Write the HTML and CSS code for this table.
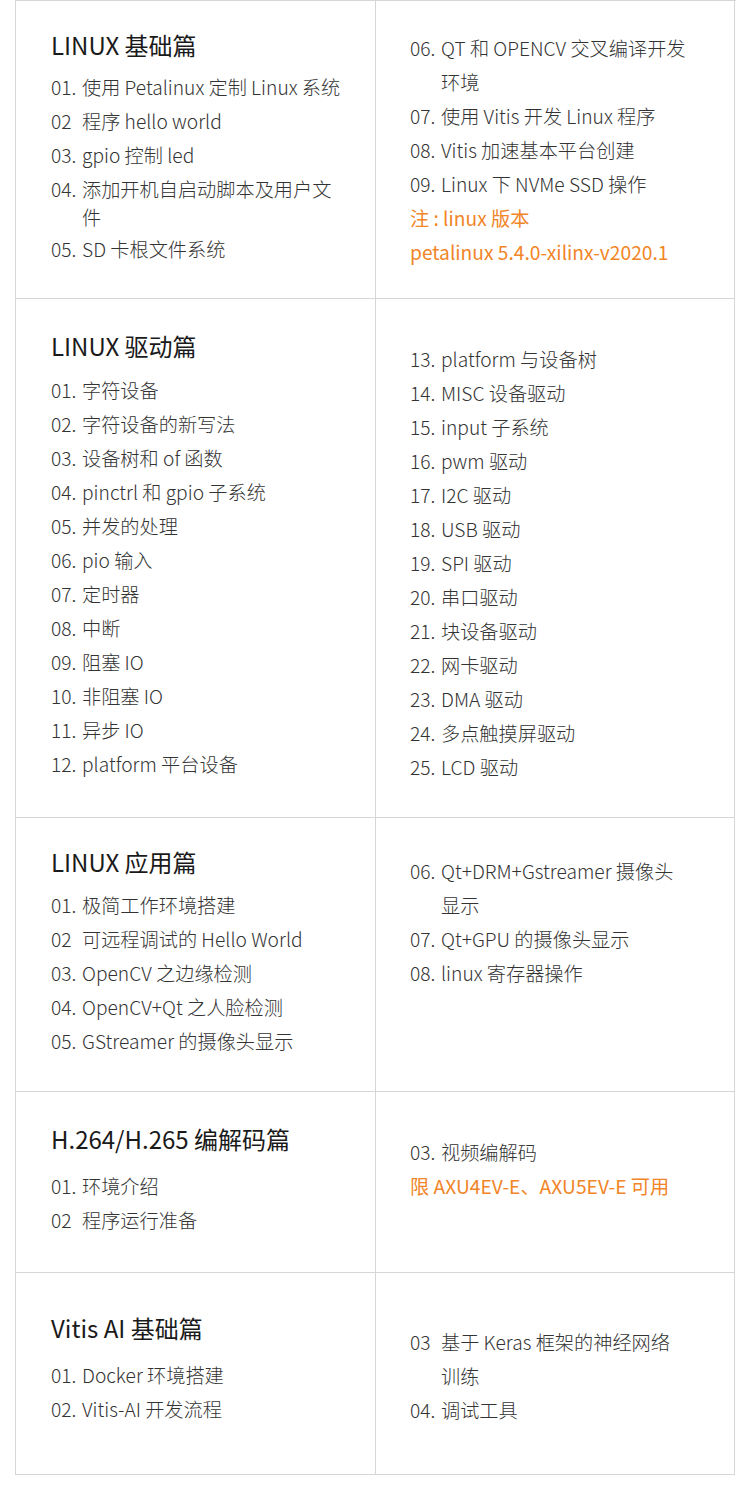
FILE: index.html
```html
<!DOCTYPE html>
<html lang="zh-CN">
<head>
<meta charset="utf-8">
<title>课程目录</title>
<link rel="stylesheet" href="styles.css">
</head>
<body>
<div class="table">
  <div class="cell l1">
    <h2 class="title">LINUX 基础篇</h2>
    <ul class="list">
      <li><span class="n">01.</span><span class="t">使用 Petalinux 定制 Linux 系统</span></li>
      <li><span class="n">02</span><span class="t">程序 hello world</span></li>
      <li><span class="n">03.</span><span class="t">gpio 控制 led</span></li>
      <li class="tight"><span class="n">04.</span><span class="t">添加开机自启动脚本及用户文<br>件</span></li>
      <li><span class="n">05.</span><span class="t">SD 卡根文件系统</span></li>
    </ul>
  </div>
  <div class="cell r1">
    <ul class="list">
      <li><span class="n">06.</span><span class="t">QT 和 OPENCV 交叉编译开发<br>环境</span></li>
      <li><span class="n">07.</span><span class="t">使用 Vitis 开发 Linux 程序</span></li>
      <li><span class="n">08.</span><span class="t">Vitis 加速基本平台创建</span></li>
      <li><span class="n">09.</span><span class="t">Linux 下 NVMe SSD 操作</span></li>
      <li class="note">注 : linux 版本</li>
      <li class="note">petalinux 5.4.0-xilinx-v2020.1</li>
    </ul>
  </div>

  <div class="cell l2">
    <h2 class="title">LINUX 驱动篇</h2>
    <ul class="list">
      <li><span class="n">01.</span><span class="t">字符设备</span></li>
      <li><span class="n">02.</span><span class="t">字符设备的新写法</span></li>
      <li><span class="n">03.</span><span class="t">设备树和 of 函数</span></li>
      <li><span class="n">04.</span><span class="t">pinctrl 和 gpio 子系统</span></li>
      <li><span class="n">05.</span><span class="t">并发的处理</span></li>
      <li><span class="n">06.</span><span class="t">pio 输入</span></li>
      <li><span class="n">07.</span><span class="t">定时器</span></li>
      <li><span class="n">08.</span><span class="t">中断</span></li>
      <li><span class="n">09.</span><span class="t">阻塞 IO</span></li>
      <li><span class="n">10.</span><span class="t">非阻塞 IO</span></li>
      <li><span class="n">11.</span><span class="t">异步 IO</span></li>
      <li><span class="n">12.</span><span class="t">platform 平台设备</span></li>
    </ul>
  </div>
  <div class="cell r2">
    <ul class="list">
      <li><span class="n">13.</span><span class="t">platform 与设备树</span></li>
      <li><span class="n">14.</span><span class="t">MISC 设备驱动</span></li>
      <li><span class="n">15.</span><span class="t">input 子系统</span></li>
      <li><span class="n">16.</span><span class="t">pwm 驱动</span></li>
      <li><span class="n">17.</span><span class="t">I2C 驱动</span></li>
      <li><span class="n">18.</span><span class="t">USB 驱动</span></li>
      <li><span class="n">19.</span><span class="t">SPI 驱动</span></li>
      <li><span class="n">20.</span><span class="t">串口驱动</span></li>
      <li><span class="n">21.</span><span class="t">块设备驱动</span></li>
      <li><span class="n">22.</span><span class="t">网卡驱动</span></li>
      <li><span class="n">23.</span><span class="t">DMA 驱动</span></li>
      <li><span class="n">24.</span><span class="t">多点触摸屏驱动</span></li>
      <li><span class="n">25.</span><span class="t">LCD 驱动</span></li>
    </ul>
  </div>

  <div class="cell l3">
    <h2 class="title">LINUX 应用篇</h2>
    <ul class="list">
      <li><span class="n">01.</span><span class="t">极简工作环境搭建</span></li>
      <li><span class="n">02</span><span class="t">可远程调试的 Hello World</span></li>
      <li><span class="n">03.</span><span class="t">OpenCV 之边缘检测</span></li>
      <li><span class="n">04.</span><span class="t">OpenCV+Qt 之人脸检测</span></li>
      <li><span class="n">05.</span><span class="t">GStreamer 的摄像头显示</span></li>
    </ul>
  </div>
  <div class="cell r3">
    <ul class="list">
      <li><span class="n">06.</span><span class="t">Qt+DRM+Gstreamer 摄像头<br>显示</span></li>
      <li><span class="n">07.</span><span class="t">Qt+GPU 的摄像头显示</span></li>
      <li><span class="n">08.</span><span class="t">linux 寄存器操作</span></li>
    </ul>
  </div>

  <div class="cell l4">
    <h2 class="title wide">H.264/H.265 编解码篇</h2>
    <ul class="list">
      <li><span class="n">01.</span><span class="t">环境介绍</span></li>
      <li><span class="n">02</span><span class="t">程序运行准备</span></li>
    </ul>
  </div>
  <div class="cell r4">
    <ul class="list">
      <li><span class="n">03.</span><span class="t">视频编解码</span></li>
      <li class="note">限 AXU4EV-E、AXU5EV-E 可用</li>
    </ul>
  </div>

  <div class="cell l5">
    <h2 class="title wide">Vitis AI 基础篇</h2>
    <ul class="list">
      <li><span class="n">01.</span><span class="t">Docker 环境搭建</span></li>
      <li><span class="n">02.</span><span class="t">Vitis-AI 开发流程</span></li>
    </ul>
  </div>
  <div class="cell r5">
    <ul class="list">
      <li><span class="n">03</span><span class="t">基于 Keras 框架的神经网络<br>训练</span></li>
      <li><span class="n">04.</span><span class="t">调试工具</span></li>
    </ul>
  </div>
</div>
</body>
</html>
```

FILE: styles.css
```css
html, body {
  margin: 0;
  padding: 0;
  background: #ffffff;
}

body {
  font-family: "Noto Sans CJK SC", "Noto Sans", sans-serif;
  font-weight: 300;
  color: #333333;
  width: 750px;
  height: 1512px;
}

.table {
  margin-left: 15px;
  width: 720px;
  display: grid;
  grid-template-columns: 360px 359px;
  border-top: 1px solid #d6d6d6;
  border-left: 1px solid #d6d6d6;
}

.cell {
  box-sizing: border-box;
  border-right: 1px solid #d6d6d6;
  border-bottom: 1px solid #d6d6d6;
  padding-left: 35px;
  padding-right: 10px;
}

.cell:nth-child(even) {
  padding-left: 34px;
  padding-right: 10px;
}

.l1 { padding-top: 30px; padding-bottom: 20px; }
.r1 { padding-top: 30px; padding-bottom: 29px; }
.l2 { padding-top: 33px; padding-bottom: 34px; }
.r2 { padding-top: 43px; padding-bottom: 33px; }
.l3 { padding-top: 30px; padding-bottom: 33px; }
.r3 { padding-top: 36px; padding-bottom: 30px; }
.l4 { padding-top: 33px; padding-bottom: 35px; }
.r4 { padding-top: 43px; padding-bottom: 35px; }
.l5 { padding-top: 41px; padding-bottom: 48px; }
.r5 { padding-top: 52px; padding-bottom: 47px; }

.title {
  margin: 0 0 11px 0;
  font-size: 24px;
  line-height: 28px;
  font-weight: 400;
  color: #1a1a1a;
}

.l2 .title {
  margin-bottom: 13px;
}

.l3 .title {
  margin-bottom: 12px;
}

.title.wide {
  margin-bottom: 16px;
}

.list {
  list-style: none;
  margin: 0;
  padding: 0;
  font-size: 19.2px;
  line-height: 34px;
}

.list li {
  display: flex;
}

.list li.tight {
  line-height: 28px;
  padding-top: 3px;
  padding-bottom: 1px;
}

.n {
  flex: none;
  width: 31px;
}

.t {
  flex: 1;
}

.list li.note {
  display: block;
  color: #f18527;
  font-weight: 400;
}
```
